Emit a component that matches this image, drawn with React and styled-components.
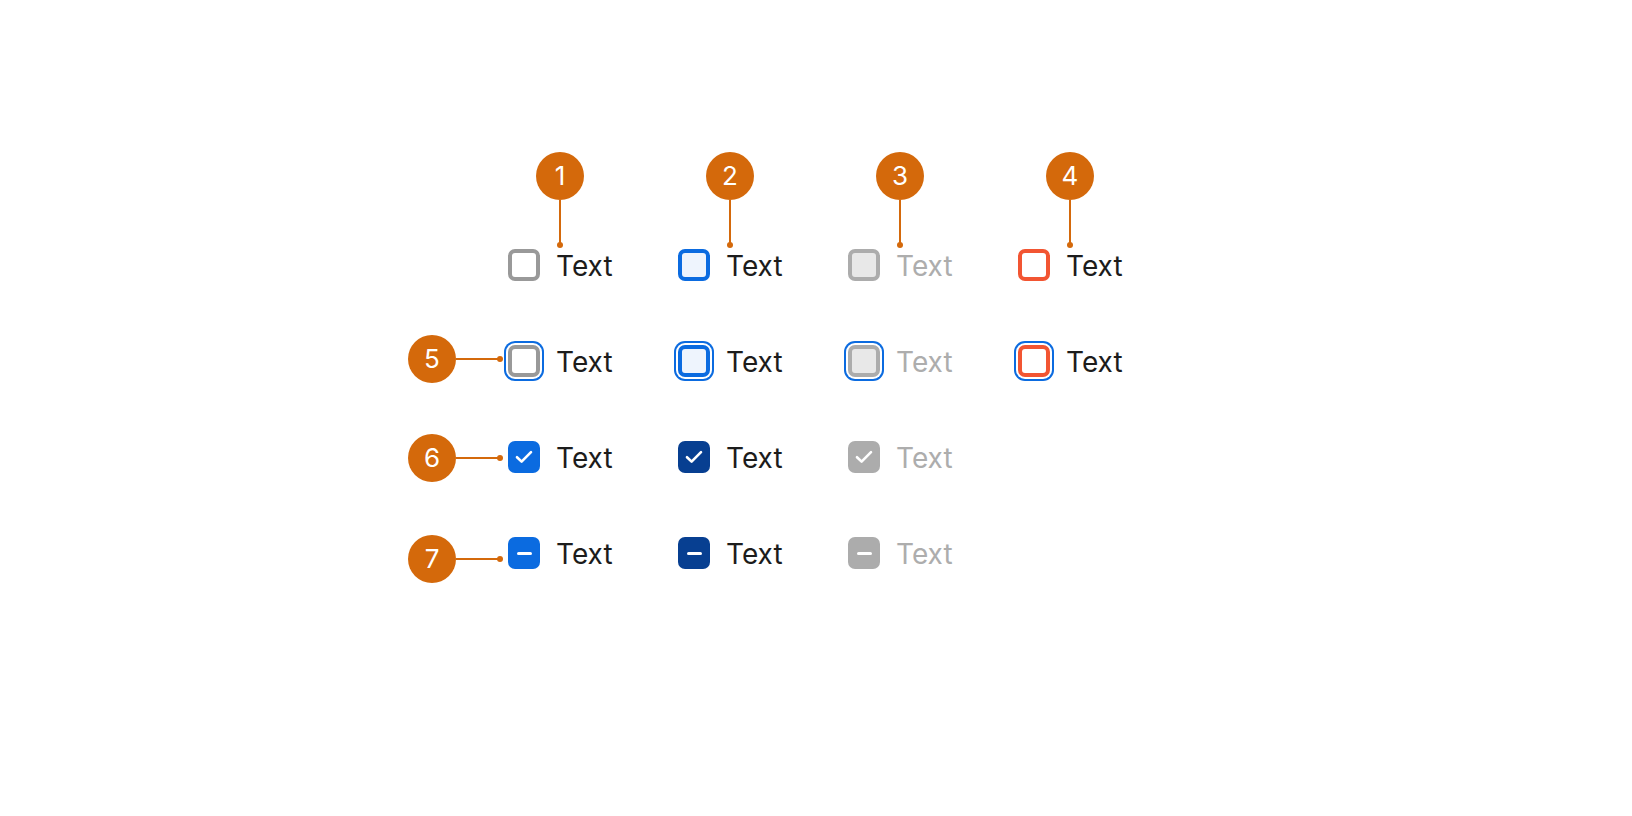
import styled, { createGlobalStyle, css } from 'styled-components';

const Global = createGlobalStyle`
  html, body {
    margin: 0;
    padding: 0;
    background: #ffffff;
  }
  body {
    font-family: Inter, 'Noto Sans', sans-serif;
  }
`;

const ORANGE = '#d4690b';
const BLUE = '#0b6be0';

const columns = [
  { key: 'default', label: '1' },
  { key: 'selected', label: '2' },
  { key: 'disabled', label: '3' },
  { key: 'error', label: '4' },
];

const rows = [
  { marker: null, kind: 'empty', focus: false, states: ['default', 'selected', 'disabled', 'error'] },
  { marker: { label: '5', shift: -2 }, kind: 'empty', focus: true, states: ['default', 'selected', 'disabled', 'error'] },
  { marker: { label: '6', shift: 1 }, kind: 'checked', focus: false, states: ['default', 'selected', 'disabled'] },
  { marker: { label: '7', shift: 6 }, kind: 'mixed', focus: false, states: ['default', 'selected', 'disabled'] },
];

const CheckIcon = () => (
  <svg width="32" height="32" viewBox="0 0 32 32" fill="none">
    <path d="M9 16.2 L13.6 20.6 L23 11.2" stroke="#fff" strokeWidth="2.6" strokeLinecap="round" strokeLinejoin="round" />
  </svg>
);

const Checkbox = ({ state, kind, focus }) => (
  <Box $state={state} $kind={kind} $focus={focus}>
    {kind === 'checked' && <CheckIcon />}
    {kind === 'mixed' && <Dash />}
  </Box>
);

const App = () => {
  return (
    <>
      <Global />
      <Page>
        <Sheet>
          <HeaderRow>
            <Spacer />
            {columns.map((c) => (
              <HeaderCell key={c.key}>
                <TopMarker>
                  <Badge>{c.label}</Badge>
                  <VLine />
                  <Dot />
                </TopMarker>
              </HeaderCell>
            ))}
          </HeaderRow>
          <Body>
            {rows.map((r, i) => (
              <Row key={i}>
                <MarkerCell>
                  {r.marker && (
                    <SideMarker $shift={r.marker.shift}>
                      <Badge>{r.marker.label}</Badge>
                      <HLine />
                      <Dot />
                    </SideMarker>
                  )}
                </MarkerCell>
                {r.states.map((s) => (
                  <Option key={s}>
                    <Checkbox state={s} kind={r.kind} focus={r.focus} />
                    <Label $disabled={s === 'disabled'}>Text</Label>
                  </Option>
                ))}
              </Row>
            ))}
          </Body>
        </Sheet>
      </Page>
    </>
  );
};

export default App;

const Page = styled.main`
  width: 1632px;
  height: 816px;
  box-sizing: border-box;
  padding: 152px 0 0 408px;
  background: #fff;
`;

const Sheet = styled.div`
  display: flex;
  flex-direction: column;
`;

const HeaderRow = styled.div`
  display: grid;
  grid-template-columns: 100px repeat(4, 170px);
`;

const Spacer = styled.div``;

const HeaderCell = styled.div`
  display: flex;
  padding-left: 28px;
`;

const TopMarker = styled.div`
  display: flex;
  flex-direction: column;
  align-items: center;
  height: 97px;
`;

const Badge = styled.div`
  display: flex;
  align-items: center;
  justify-content: center;
  flex-shrink: 0;

  width: 48px;
  height: 48px;
  border-radius: 50%;
  background: ${ORANGE};

  color: #fff;
  font-size: 26px;
  font-weight: 400;
  line-height: 1;
`;

const VLine = styled.div`
  width: 2px;
  height: 44px;
  background: ${ORANGE};
`;

const HLine = styled.div`
  width: 43px;
  height: 2px;
  background: ${ORANGE};
`;

const Dot = styled.div`
  width: 6px;
  height: 6px;
  border-radius: 50%;
  background: ${ORANGE};
  margin: -2px;
`;

const Body = styled.div`
  display: flex;
  flex-direction: column;
  gap: 64px;
`;

const Row = styled.div`
  display: grid;
  grid-template-columns: 100px repeat(4, 170px);
  grid-template-rows: 32px;
  align-items: center;
`;

const MarkerCell = styled.div`
  display: flex;
  align-items: center;
  height: 32px;
`;

const SideMarker = styled.div`
  display: flex;
  align-items: center;
  transform: translateY(${({ $shift }) => $shift}px);
`;

const Option = styled.label`
  display: flex;
  align-items: center;
  gap: 16px;
  height: 32px;
`;

const boxLook = {
  default: css`
    border: 4px solid #999999;
    background: #ffffff;
  `,
  selected: css`
    border: 4px solid ${BLUE};
    background: #eef4fd;
  `,
  disabled: css`
    border: 4px solid #acacac;
    background: #e8e8e8;
  `,
  error: css`
    border: 4px solid #f25532;
    background: #ffffff;
  `,
};

const fillLook = {
  default: BLUE,
  selected: '#073f91',
  disabled: '#acacac',
};

const Box = styled.span`
  position: relative;
  display: flex;
  align-items: center;
  justify-content: center;
  flex-shrink: 0;
  box-sizing: border-box;

  width: 32px;
  height: 32px;
  border-radius: 7px;

  ${({ $state, $kind }) =>
    $kind === 'empty'
      ? boxLook[$state]
      : css`
          border: none;
          background: ${fillLook[$state]};
        `}

  ${({ $focus }) =>
    $focus &&
    css`
      box-shadow: 0 0 0 2px #ffffff, 0 0 0 4px ${BLUE};
    `}
`;

const Dash = styled.span`
  width: 15px;
  height: 3px;
  border-radius: 2px;
  background: #fff;
`;

const Label = styled.span`
  color: ${({ $disabled }) => ($disabled ? '#adadad' : '#1c1c1c')};
  font-size: 28px;
  font-weight: 400;
  line-height: 30px;
  padding-top: 2px;
`;
